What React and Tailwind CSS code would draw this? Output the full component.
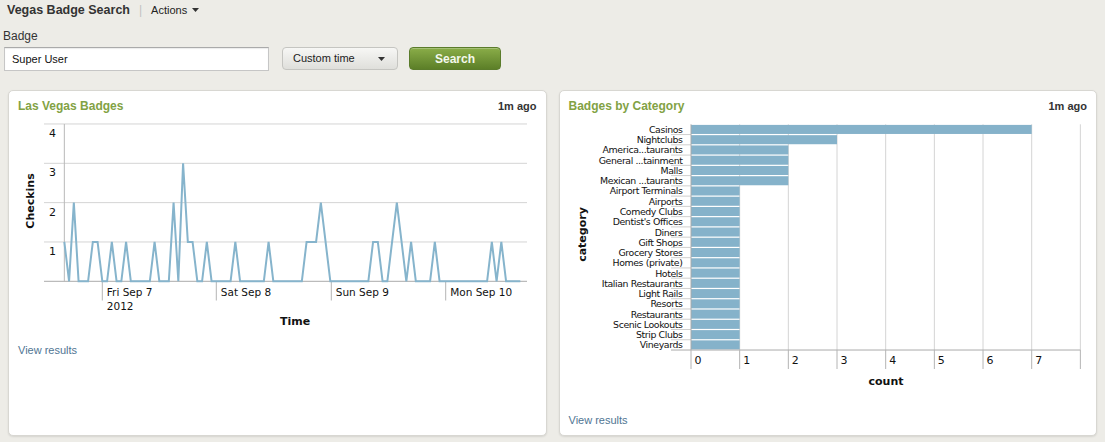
import React from 'react';

const chartFont = "'DejaVu Sans', Verdana, sans-serif";

// hourly checkins, Thu Sep 6 16:00 -> Mon Sep 10 16:00
const checkins = [
  1, 0, 2, 0, 0, 0, 1, 1, 0, 0,
  1, 0, 0, 1, 0, 0, 0, 0, 0, 1,
  0, 0, 0, 2, 0, 3, 1, 1, 0, 0,
  1, 0, 0, 0, 0, 0, 1, 0, 0, 0,
  0, 0, 0, 1, 0, 0, 0, 0, 0, 0,
  0, 1, 1, 1, 2, 1, 0, 0, 0, 0,
  0, 0, 0, 0, 0, 1, 1, 0, 0, 1,
  2, 1, 0, 1, 0, 0, 0, 0, 1, 0,
  0, 0, 0, 0, 0, 0, 0, 0, 0, 0,
  1, 0, 1, 0, 0, 0, 0,
];

const categories = [
  ['Casinos', 7], ['Nightclubs', 3], ['America...taurants', 2], ['General ...tainment', 2],
  ['Malls', 2], ['Mexican ...taurants', 2], ['Airport Terminals', 1], ['Airports', 1],
  ['Comedy Clubs', 1], ["Dentist's Offices", 1], ['Diners', 1], ['Gift Shops', 1],
  ['Grocery Stores', 1], ['Homes (private)', 1], ['Hotels', 1], ['Italian Restaurants', 1],
  ['Light Rails', 1], ['Resorts', 1], ['Restaurants', 1], ['Scenic Lookouts', 1],
  ['Strip Clubs', 1], ['Vineyards', 1],
];

function Caret({ className = '' }) {
  return (
    <svg width="7" height="4" viewBox="0 0 7 4" className={className}>
      <path d="M0 0 L7 0 L3.5 4 Z" fill="#333" />
    </svg>
  );
}

function Panel({ title, children, link = 'View results', linkGap }) {
  return (
    <div className="bg-white rounded-[5px] border border-[#d8d7d2] shadow-[0_1px_2px_rgba(0,0,0,0.10)] flex flex-col pb-[8px]">
      <div className="flex justify-between items-center px-[9px] pt-[8px] leading-[14px]">
        <span className="text-[12px] font-bold text-[#82a244]">{title}</span>
        <span className="text-[11px] font-bold text-[#333]">1m ago</span>
      </div>
      <div className="mt-[1px]">{children}</div>
      <a className={`${linkGap} px-[9px] text-[11px] leading-[14px] text-[#4f7593] cursor-pointer`}>{link}</a>
    </div>
  );
}

function CheckinsChart() {
  const base = 281.3, unit = 39.33, x0 = 64.33, step = 4.75;
  const pts = checkins.map((v, i) => `${(x0 + i * step).toFixed(2)},${(base - v * unit).toFixed(2)}`).join(' ');
  const ticks = [[102.3, 'Fri Sep 7'], [216.3, 'Sat Sep 8'], [331.3, 'Sun Sep 9'], [445.7, 'Mon Sep 10']];
  return (
    <svg width="536" height="216" className="block">
      <g transform="translate(-9,-114)" fontFamily={chartFont} fill="#111">
        {[4, 3, 2, 1].map((v) => {
          const y = base - v * unit;
          return (
            <g key={v}>
              <line x1="44" x2="527" y1={y} y2={y} stroke="#d4d4d4" strokeWidth="1" />
              <text x="52.5" y={y + 9.5} fontSize="11" textAnchor="middle" dominantBaseline="central">{v}</text>
            </g>
          );
        })}
        <line x1="44" x2="527" y1={base} y2={base} stroke="#aaa" strokeWidth="1" />
        <line x1={x0} x2={x0} y1={124} y2={base} stroke="#b8b8b8" strokeWidth="1" />
        {ticks.map(([x, label]) => (
          <g key={label}>
            <line x1={x} x2={x} y1={base} y2={300.5} stroke="#b4b4b4" strokeWidth="1" />
            <text x={x + 4.5} y="292" fontSize="10.5" dominantBaseline="central">{label}</text>
          </g>
        ))}
        <text x="106.8" y="306" fontSize="10.5" dominantBaseline="central">2012</text>
        <text x="295" y="321.5" fontSize="11" fontWeight="bold" textAnchor="middle" dominantBaseline="central">Time</text>
        <text transform="translate(30.5,201) rotate(-90)" fontSize="11" fontWeight="bold" textAnchor="middle" dominantBaseline="central">Checkins</text>
        <polyline points={pts} fill="none" stroke="#86b4cc" strokeWidth="2" />
      </g>
    </svg>
  );
}

function CategoryChart() {
  const ax = 690, unit = 48.67, top = 124.3, row = 10.26;
  const bottom = top + categories.length * row;
  return (
    <svg width="537" height="278" className="block">
      <g transform="translate(-559,-114)" fontFamily={chartFont} fill="#111">
        {[1, 2, 3, 4, 5, 6, 7, 8].map((k) => (
          <line key={k} x1={ax + k * unit} x2={ax + k * unit} y1={top} y2={bottom} stroke="#d4d4d4" strokeWidth="1" />
        ))}
        {categories.map(([name, count], i) => {
          const y = top + i * row;
          return (
            <g key={name}>
              <rect x={ax} y={y + 0.6} width={count * unit} height={row - 1.2} fill="#85b2ca" />
              {i > 0 && <line x1="670" x2={ax} y1={y} y2={y} stroke="#cfcfcf" strokeWidth="1" />}
              <text x="681.5" y={y + row / 2} fontSize="9.4" letterSpacing="-0.4" textAnchor="end" dominantBaseline="central">{name}</text>
            </g>
          );
        })}
        <line x1={ax} x2={ax} y1={top} y2={bottom} stroke="#aaa" strokeWidth="1" />
        <line x1="670" x2={ax + 8 * unit} y1={bottom} y2={bottom} stroke="#aaa" strokeWidth="1" />
        {[0, 1, 2, 3, 4, 5, 6, 7, 8].map((k) => (
          <g key={k}>
            <line x1={ax + k * unit} x2={ax + k * unit} y1={bottom} y2={369} stroke="#b4b4b4" strokeWidth="1" />
            {k < 8 && <text x={ax + k * unit + 3.5} y="360" fontSize="11" dominantBaseline="central">{k}</text>}
          </g>
        ))}
        <text x="885" y="381.5" fontSize="11" fontWeight="bold" textAnchor="middle" dominantBaseline="central">count</text>
        <text transform="translate(581,234.5) rotate(-90)" fontSize="11" fontWeight="bold" textAnchor="middle" dominantBaseline="central">category</text>
      </g>
    </svg>
  );
}

export default function App() {
  return (
    <div className="min-h-screen w-[1105px] bg-[#edece7] font-['Liberation_Sans',Arial,sans-serif] text-[#333]">
      <div className="flex items-center h-[20px] pl-[7px]">
        <span className="text-[12.5px] font-bold text-[#333]">Vegas Badge Search</span>
        <span className="mx-[9px] text-[12px] text-[#c2c2c2]">|</span>
        <span className="text-[11px] text-[#222]">Actions</span>
        <Caret className="ml-[5px]" />
      </div>
      <div className="mt-[8px] pl-[3px] text-[12px] leading-[16px]">Badge</div>
      <div className="mt-[3px] pl-[4px] flex items-start">
        <div className="w-[265px] h-[24px] bg-white border border-[#c6c6c6] border-t-[#aaa] shadow-[inset_0_1px_1px_rgba(0,0,0,0.08)] flex items-center pl-[7px] text-[11px] text-[#111]">
          Super User
        </div>
        <button className="ml-[13px] w-[116px] h-[23px] rounded-[4px] border border-[#c5c5c1] bg-gradient-to-b from-[#f7f7f5] to-[#dfdfdb] flex items-center justify-between pl-[10px] pr-[12px] text-[11px] text-[#222]">
          <span>Custom time</span>
          <Caret />
        </button>
        <button className="ml-[11px] w-[92px] h-[23px] rounded-[4px] border border-[#5b7c2b] bg-gradient-to-b from-[#8aad48] to-[#5c7f28] text-[12px] font-bold text-[#f4f8ec] shadow-[inset_0_1px_0_rgba(255,255,255,0.25)]">
          Search
        </button>
      </div>
      <div className="mt-[19px] px-[8px] grid grid-cols-2 gap-[12px]">
        <Panel title="Las Vegas Badges" linkGap="mt-[13px]">
          <CheckinsChart />
        </Panel>
        <Panel title="Badges by Category" linkGap="mt-[21px]">
          <CategoryChart />
        </Panel>
      </div>
    </div>
  );
}
